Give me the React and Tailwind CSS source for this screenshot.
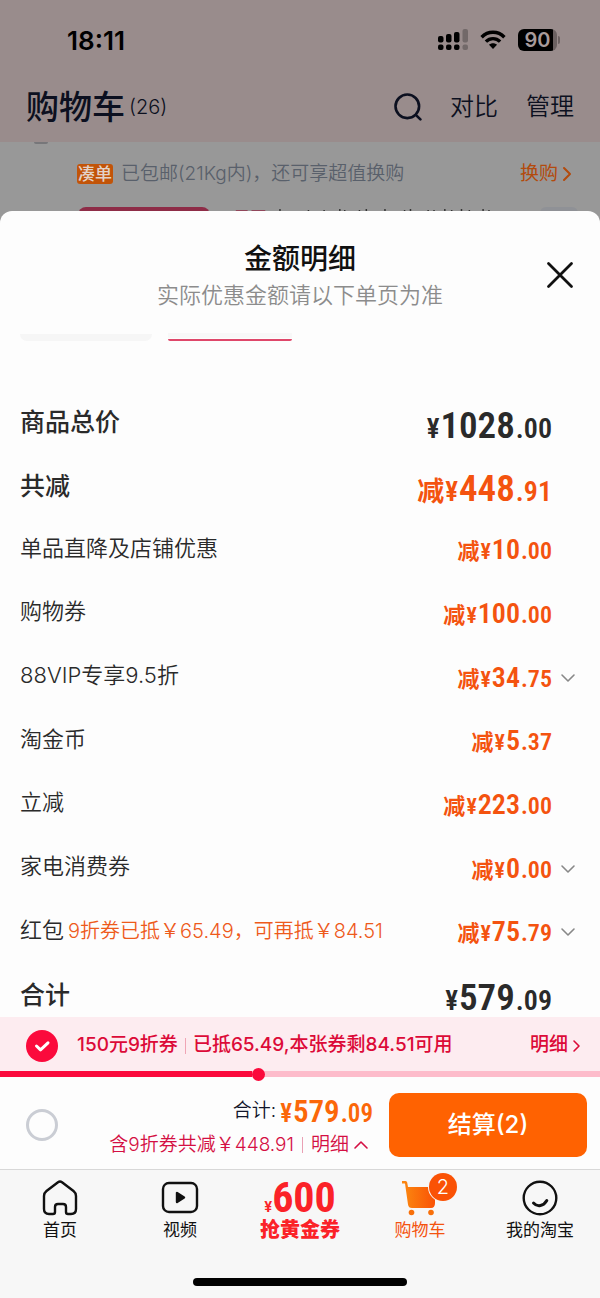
import React, { useState } from "react";

const discounts = [
  { label: "单品直降及店铺优惠", int: "10", dec: "00" },
  { label: "购物券", int: "100", dec: "00" },
  { label: "88VIP专享9.5折", int: "34", dec: "75", more: true },
  { label: "淘金币", int: "5", dec: "37" },
  { label: "立减", int: "223", dec: "00" },
  { label: "家电消费券", int: "0", dec: "00", more: true },
  {
    label: "红包",
    note: "9折券已抵￥65.49，可再抵￥84.51",
    int: "75",
    dec: "79",
    more: true,
  },
];

// text sizes of the parts of a price
const priceSizes = {
  sm: { prefix: "text-[22px]", sign: "text-[22px]", int: "text-[28px]", dec: "text-[24px]" },
  md: { prefix: "text-[22px]", sign: "text-[25px]", int: "text-[31px]", dec: "text-[25px]" },
  lg: { prefix: "text-[27px]", sign: "text-[27px]", int: "text-[37px]", dec: "text-[28px]" },
};

function Chevron({ className, d }) {
  return (
    <svg viewBox="0 0 16 16" className={className} fill="none" stroke="currentColor" strokeWidth="1.6" strokeLinecap="round" strokeLinejoin="round">
      <path d={d} />
    </svg>
  );
}

function Price({ prefix, int, dec, size = "sm" }) {
  const s = priceSizes[size];
  return (
    <span className="flex items-baseline gap-px font-['Roboto_Condensed','Noto_Sans_CJK_SC',sans-serif] leading-none font-semibold whitespace-nowrap">
      {prefix && <span className={"font-bold " + s.prefix}>{prefix}</span>}
      <span className={s.sign}>¥</span>
      <span className={s.int}>{int}</span>
      <span className={s.dec}>.{dec}</span>
    </span>
  );
}

function StatusBar() {
  return (
    <div className="flex h-20 items-center justify-between pr-10 pl-[67px] text-black">
      <span className="font-[Inter,sans-serif] text-[26px] font-semibold">18:11</span>
      <div className="flex items-center gap-3">
        <svg width="30" height="22" viewBox="0 0 30 22">
          <rect x="0" y="7" width="5.500" height="6.500" rx="2" />
          <rect x="8" y="5" width="5.500" height="8.500" rx="2" />
          <rect x="16" y="3" width="5.500" height="10.500" rx="2" />
          <rect x="24.500" y="0" width="5.500" height="13.500" rx="2" opacity=".25" />
          <rect x="0" y="15.500" width="5.500" height="5.500" rx="2" />
          <rect x="8" y="15.500" width="5.500" height="5.500" rx="2" />
          <rect x="16" y="15.500" width="5.500" height="5.500" rx="2" />
          <rect x="24.500" y="15.500" width="5.500" height="5.500" rx="2" opacity=".25" />
        </svg>
        <svg width="26" height="20" viewBox="0 0 26 20" fill="none" stroke="#000" strokeWidth="3.4">
          <path d="M1.6 7.2C8 .6 18 .6 24.4 7.2" />
          <path d="M5.9 11.6c4.1-4 10.1-4 14.2 0" />
          <path d="M9 14.8c2.3-2 5.7-2 8 0L13 19z" fill="#000" stroke="none" />
        </svg>
        <div className="flex items-center gap-px">
          <span className="flex h-[22px] w-[39px] items-center justify-center rounded-md bg-linear-to-r from-black from-90% to-[#6b6161] to-90% font-[Inter,sans-serif] text-[20px] font-semibold text-[#a89b9b]">
            90
          </span>
          <span className="h-2 w-[2px] rounded-r-full bg-[#6b6161]" />
        </div>
      </div>
    </div>
  );
}

function CartHeader() {
  return (
    <header className="bg-[#998c8c] text-[#0c1020]">
      <StatusBar />
      <div className="flex h-[62px] items-center justify-between px-[26px] pb-2">
        <div className="flex items-center gap-1">
          <h1 className="text-[33px] leading-10 font-medium">购物车</h1>
          <span className="text-[20px] font-light">(26)</span>
        </div>
        <div className="flex items-center gap-7 text-[24px] font-[350]">
          <button aria-label="搜索">
            <svg width="28" height="28" viewBox="0 0 28 28" fill="none" stroke="currentColor" strokeWidth="2.6" strokeLinecap="round">
              <circle cx="13.3" cy="13.3" r="11.8" />
              <path d="M21.8 21.8l4.6 4.6" />
            </svg>
          </button>
          <button>对比</button>
          <button>管理</button>
        </div>
      </div>
    </header>
  );
}

function CartBackdrop() {
  return (
    <div className="flex h-[81px] flex-col bg-[#989898]">
      <div className="ml-[34px] h-[2px] w-[14px] rounded-b-full bg-[#77777a]" />
      <div className="flex h-[60px] items-center pr-[26px] pl-[77px] text-[19px]">
        <span className="mr-2 rounded-[3px] bg-[#c25408] px-px text-[17px] leading-5 font-medium text-[#e3d3c8]">凑单</span>
        <span className="font-[350] text-[#59606b]">已包邮(21Kg内)，还可享超值换购</span>
        <a href="#swap" className="ml-auto flex items-center text-[#b34a0c]">
          换购
          <Chevron className="size-4 stroke-2" d="M6 2l6 6-6 6" />
        </a>
      </div>
      <div className="mt-[3px] flex items-start pr-[22px] pl-[78px]">
        <div className="h-4 w-[132px] rounded-lg bg-[#8e2c47]" />
        <svg className="ml-4 h-1 flex-1" viewBox="0 0 320 4" preserveAspectRatio="xMinYMin" stroke="#333" strokeWidth="1.5">
          <path d="M10 4h12M26 4h14" stroke="#8e2c47" />
          <path d="M55 2v3M84 3v2M100 3v2M116 2v3M121 3v2M136 3v2M143 2v3M162 2v3M182 3v2M188 2v3M206 3v2M212 3v2M223 2v3M230 3v2M240 2v3M248 3v2M262 2v3M268 3v2" />
        </svg>
        <div className="h-[15px] w-[38px] rounded-md bg-[#8f9196]" />
      </div>
    </div>
  );
}

function PriceSheet() {
  return (
    <section className="-mt-3 flex flex-1 flex-col rounded-t-xl bg-[#fdfdfd] text-[#2a2a2a]">
      <div className="grid grid-cols-[1fr_auto_1fr] items-center px-6 pt-7">
        <div className="col-start-2 text-center">
          <h2 className="text-[28px] leading-10 font-medium text-[#111]">金额明细</h2>
          <p className="text-[22px] leading-8 font-[350] text-[#8c8c8c]">实际优惠金额请以下单页为准</p>
        </div>
        <button aria-label="关闭" className="justify-self-end">
          <svg width="32" height="32" viewBox="0 0 32 32" fill="none" stroke="#111" strokeWidth="2.8" strokeLinecap="round">
            <path d="M4.5 4.5l23 23M27.500 4.500l-23 23" />
          </svg>
        </button>
      </div>

      {/* bottom edge of the scrolled goods cards */}
      <div className="mt-[22px] flex h-2 items-end gap-4 pl-5">
        <div className="h-[7px] w-[132px] rounded-b-xl bg-[#f6f6f6]" />
        <div className="flex h-2 w-[124px] flex-col justify-between">
          <div className="h-[5px] bg-[#f8f8f8]" />
          <div className="h-[2px] rounded-b-full bg-[#df476a]" />
        </div>
      </div>

      <ul className="flex flex-1 flex-col justify-between pt-[60px] pr-6 pb-[3px] pl-5">
        <li className="flex h-10 items-center justify-between">
          <span className="pt-1 text-[25px] font-medium">商品总价</span>
          <span className="pt-2 pr-6">
            <Price int="1028" dec="00" size="lg" />
          </span>
        </li>
        <li className="flex h-10 items-center justify-between">
          <span className="pt-1 text-[25px] font-medium">共减</span>
          <span className="pt-2 pr-6 text-[#f4530f]">
            <Price prefix="减" int="448" dec="91" size="lg" />
          </span>
        </li>
        {discounts.map((item) => (
          <li key={item.label} className="flex h-10 items-center justify-between">
            <span className="text-[22px] font-[350]">
              {item.label}
              {item.note && <span className="ml-1 text-[20px] text-[#ee5a1b]">{item.note}</span>}
            </span>
            <span className="flex items-center pt-1 text-[#f4530f]">
              <Price prefix="减" int={item.int} dec={item.dec} />
              {item.more ? (
                <button aria-label={"展开" + item.label} className="flex w-6 justify-end text-[#888]">
                  <Chevron className="size-4" d="M2 5l6 6 6-6" />
                </button>
              ) : (
                <span className="w-6" />
              )}
            </span>
          </li>
        ))}
        <li className="flex h-10 items-center justify-between">
          <span className="pt-1 text-[25px] font-medium">合计</span>
          <span className="pt-2 pr-6">
            <Price int="579" dec="09" size="lg" />
          </span>
        </li>
      </ul>
    </section>
  );
}

function CouponBar() {
  const [used, setUsed] = useState(true);
  return (
    <div className="bg-[#fdecf0] text-[#dc0a38]">
      <div className="flex h-[54px] items-center pt-[3px] pr-4 pl-[26px] text-[19px] font-medium">
        <label className="relative mr-[19px] flex">
          <input
            type="checkbox"
            aria-label="使用优惠券"
            checked={used}
            onChange={() => setUsed(!used)}
            className="size-8 appearance-none rounded-full bg-[#fb0a3c]"
          />
          <svg className="pointer-events-none absolute inset-0" viewBox="0 0 32 32" fill="none" stroke="#fff" strokeWidth="3" strokeLinecap="round" strokeLinejoin="round">
            <path d="M10.500 16l4 3.800 7.500-7" />
          </svg>
        </label>
        <span>150元9折券</span>
        <span className="mx-[7px] h-4 w-px bg-[#f0a5b5]" />
        <span>已抵65.49,本张券剩84.51可用</span>
        <a href="#coupon" className="ml-auto flex items-center">
          明细
          <Chevron className="size-4" d="M6 3l5 5-5 5" />
        </a>
      </div>
      <div className="flex h-[6px] items-center bg-[#fdbccb]">
        <div className="h-full w-[42%] bg-[#fb0a3c]" />
        <div className="z-10 size-[13px] shrink-0 rounded-full bg-[#fb0a3c]" />
      </div>
    </div>
  );
}

function CheckoutBar() {
  return (
    <div className="flex h-[93px] items-center border-b border-[#d8d8d8] bg-[#fdfdfd] pt-1 pr-[13px] pl-[26px]">
      <input type="radio" aria-label="全选" className="size-8 appearance-none rounded-full border-[3px] border-[#cacdd4]" />
      <div className="ml-auto flex flex-col items-end pt-1 pr-4">
        <div className="flex h-9 items-center gap-1">
          <span className="text-[19px] font-[350] text-[#11152a]">合计:</span>
          <span className="text-[#fb6709]">
            <Price int="579" dec="09" size="md" />
          </span>
        </div>
        <div className="flex h-8 items-center pr-1 text-[19px] font-[350] text-[#d40f43]">
          <span>含9折券共减￥448.91</span>
          <span className="mx-2 h-4 w-px bg-[#eaa0b4]" />
          <button className="flex items-center">
            明细
            <Chevron className="ml-1 size-4" d="M2 11l6-6 6 6" />
          </button>
        </div>
      </div>
      <button className="h-16 w-[198px] rounded-[10px] bg-[#ff6201] text-[24px] font-medium text-white">结算(2)</button>
    </div>
  );
}

function TabBar() {
  return (
    <footer className="bg-[#f7f7f7] pb-3">
      <nav className="grid h-[96px] grid-cols-5 text-[17px] leading-6 text-[#111]">
        <a href="#home" className="flex flex-col items-center pt-2">
          <svg width="40" height="40" viewBox="0 0 40 40" fill="none" stroke="#111" strokeWidth="2.4" strokeLinejoin="round">
            <path d="M18 4.200Q20 2.800 22 4.200L33.500 13Q36 15 36 18V31Q36 36 31 36H28Q26 36 26 34V29Q26 26 23 26H18Q15 26 15 29V34Q15 36 13 36H9Q4 36 4 31V18Q4 15 6.500 13Z" />
          </svg>
          首页
        </a>
        <a href="#video" className="flex flex-col items-center pt-2">
          <svg width="40" height="40" viewBox="0 0 40 40" fill="none" stroke="#111" strokeWidth="2.400">
            <rect x="3" y="5" width="34" height="29" rx="6" />
            <path d="M17 15v9l7-4.500z" fill="#111" strokeLinejoin="round" />
          </svg>
          视频
        </a>
        <a href="#gold" className="flex flex-col items-center pt-2 text-[#fb2228]">
          <span className="flex h-10 items-baseline leading-10 font-bold">
            <span className="text-[14px]">¥</span>
            <span className="font-['Roboto_Condensed',sans-serif] text-[42px]">600</span>
          </span>
          <span className="pt-[2px] text-[20px] leading-5 font-black">抢黄金券</span>
        </a>
        <a href="#cart" className="relative flex flex-col items-center pt-2 text-[#f4530f]">
          <svg width="40" height="40" viewBox="0 0 40 40">
            <defs>
              <linearGradient id="cart" x1="0" x2="1">
                <stop offset="0" stopColor="#fb8a10" />
                <stop offset="1" stopColor="#fa5205" />
              </linearGradient>
            </defs>
            <path d="M2 3h3.500Q7 3 7.200 4.500L8 9H35V25Q35 30 31 30H12Q8.500 30 8 26.500L5 5.500H2Z" fill="url(#cart)" />
            <circle cx="11.500" cy="34.500" r="2.800" fill="#f8700a" />
            <circle cx="31" cy="34.500" r="2.800" fill="#f8700a" />
          </svg>
          购物车
          <span className="absolute top-[3px] left-1/2 ml-[9px] flex size-7 items-center justify-center rounded-full bg-[#fa5205] text-[20px] font-light text-white ring-1 ring-[#f7f7f7]">
            2
          </span>
        </a>
        <a href="#mine" className="flex flex-col items-center pt-2">
          <svg width="40" height="40" viewBox="0 0 40 40" fill="none" stroke="#111" strokeWidth="2.400" strokeLinecap="round">
            <circle cx="20" cy="20" r="16.300" />
            <path d="M13.500 25c4 4.500 10 3.200 13.300-2.500" strokeWidth="3" />
          </svg>
          我的淘宝
        </a>
      </nav>
      <div className="mx-auto mt-3 h-2 w-[214px] rounded-full bg-black" />
    </footer>
  );
}

function App() {
  return (
    <div className="flex min-h-screen flex-col bg-[#fdfdfd] font-[Inter,'Noto_Sans_CJK_SC',sans-serif]">
      <CartHeader />
      <CartBackdrop />
      <PriceSheet />
      <CouponBar />
      <CheckoutBar />
      <TabBar />
    </div>
  );
}

export default App;
